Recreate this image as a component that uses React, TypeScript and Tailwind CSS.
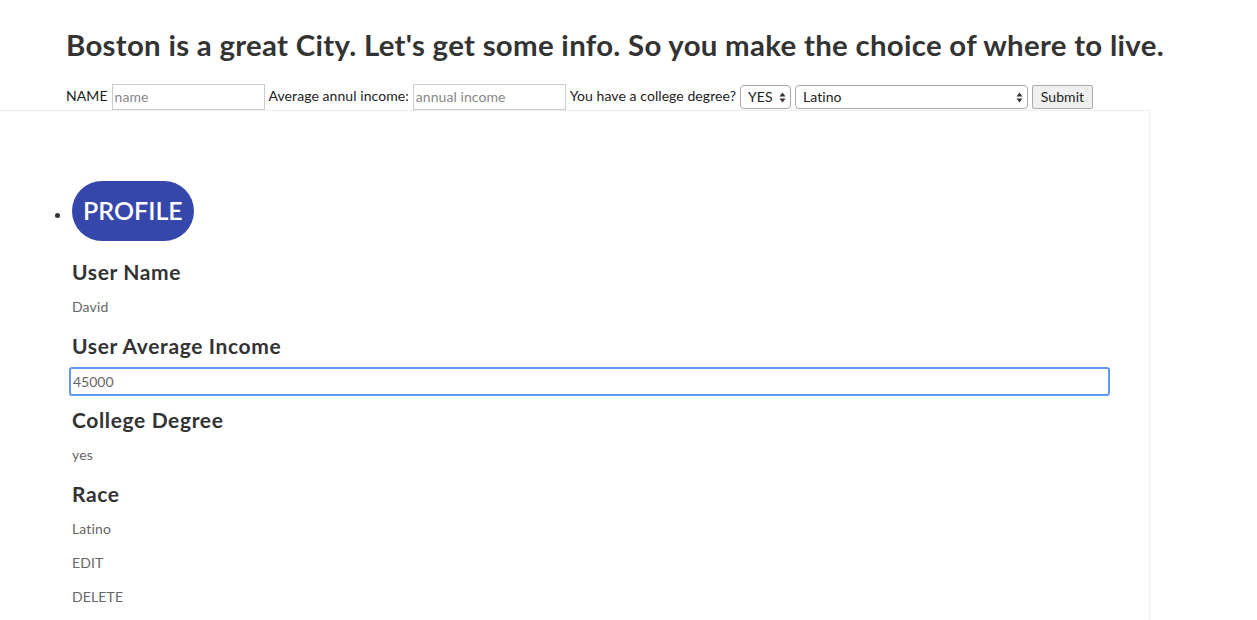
function Arrows() {
  return (
    <svg width="7" height="11" viewBox="0 0 7 11" className="shrink-0">
      <path d="M3.5 0.5 L6.5 4.5 L0.5 4.5 Z" fill="#333" />
      <path d="M3.5 10.5 L6.5 6.5 L0.5 6.5 Z" fill="#333" />
    </svg>
  );
}

export default function App() {
  const label = "text-[21px] leading-[30px] font-bold tracking-[0.03em]";
  const value = "text-[14px] leading-[16px] text-[#666] tracking-[0.01em]";
  return (
    <div className="w-[1257px] h-[620px] overflow-hidden bg-white text-[#333] font-['Lato',sans-serif]">
      <h1 className="pl-[66px] pt-[26px] text-[29.4px] leading-[38px] font-bold tracking-[0.01em] text-[#333]">
        Boston is a great City. Let's get some info. So you make the choice of where to live.
      </h1>
      <form className="flex items-center pl-[66px] mt-[20px] h-[26px] text-[14px] leading-[16px] text-[#222] tracking-[0.005em]">
        <span className="mr-[4px] -mt-[2px]">NAME</span>
        <input
          placeholder="name"
          className="w-[153px] h-[26px] border border-[#ccc] px-[2px] pb-[2px] text-[14px] placeholder:text-[#888]"
        />
        <span className="ml-[4px] mr-[4px] -mt-[2px]">Average annul income:</span>
        <input
          placeholder="annual income"
          className="w-[153px] h-[26px] border border-[#ccc] px-[2px] pb-[2px] text-[14px] placeholder:text-[#888]"
        />
        <span className="ml-[4px] mr-[4px] -mt-[2px]">You have a college degree?</span>
        <div className="flex items-center justify-between w-[51px] h-[24px] border border-[#aaa] rounded-[4px] pl-[7px] pr-[4px]">
          <span className="-mt-[1px]">YES</span>
          <Arrows />
        </div>
        <div className="flex items-center justify-between w-[233px] h-[24px] border border-[#aaa] rounded-[4px] pl-[7px] pr-[4px] ml-[4px]">
          <span className="-mt-[1px]">Latino</span>
          <Arrows />
        </div>
        <button
          type="button"
          className="ml-[4px] w-[61px] h-[24px] border border-[#aaa] bg-[#efefef] rounded-[2px] text-[14px] leading-[20px]"
        >
          Submit
        </button>
      </form>
      <div className="w-[1150px] h-[520px] border-t border-r border-[#eee]">
        <ul className="list-disc pl-[72px] pt-[70px] text-[#333]">
          <li>
            <span className="inline-flex items-center justify-center h-[60px] px-[11px] rounded-full bg-[#3547ab] text-white text-[25px] font-semibold">
              PROFILE
            </span>
            <h3 className={`mt-[16px] ${label}`}>User Name</h3>
            <p className={`mt-[12px] ${value}`}>David</p>
            <h3 className={`mt-[16px] ${label}`}>User Average Income</h3>
            <input
              defaultValue="45000"
              className="-ml-[3px] mt-[6px] w-[1041px] h-[29px] border-2 border-[#6098f5] rounded-[3px] px-[2px] text-[14px] text-[#666] outline-none"
            />
            <h3 className={`mt-[9px] ${label}`}>College Degree</h3>
            <p className={`mt-[12px] ${value}`}>yes</p>
            <h3 className={`mt-[16px] ${label}`}>Race</h3>
            <p className={`mt-[12px] ${value}`}>Latino</p>
            <p className={`mt-[18px] ${value}`}>EDIT</p>
            <p className={`mt-[18px] ${value}`}>DELETE</p>
          </li>
        </ul>
      </div>
    </div>
  );
}
